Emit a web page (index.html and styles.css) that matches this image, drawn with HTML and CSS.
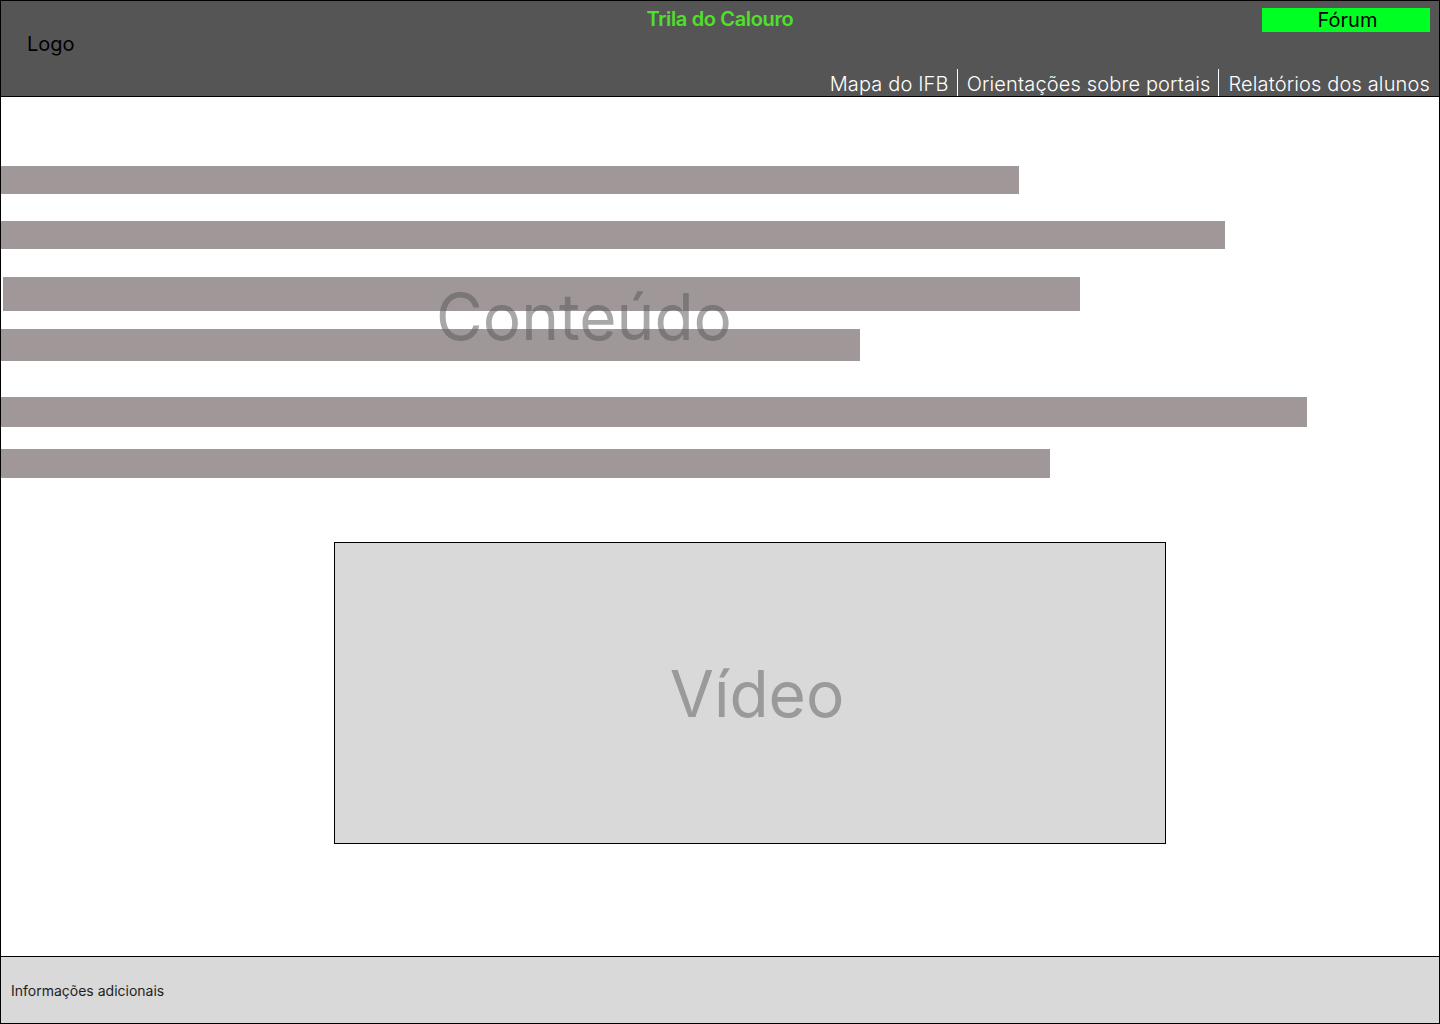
FILE: index.html
```html
<!DOCTYPE html>
<html lang="pt-BR">
<head>
<meta charset="utf-8">
<title>Trila do Calouro</title>
<link rel="stylesheet" href="styles.css">
</head>
<body>
<div class="page">
  <header class="header">
    <div class="logo">Logo</div>
    <div class="title">Trila do Calouro</div>
    <a class="forum" href="#">Fórum</a>
    <nav class="nav">
      <a href="#" class="nav-item">Mapa do IFB</a>
      <a href="#" class="nav-item">Orientações sobre portais</a>
      <a href="#" class="nav-item">Relatórios dos alunos</a>
    </nav>
  </header>
  <main class="main">
    <div class="bars">
      <div class="bar bar1"></div>
      <div class="bar bar2"></div>
      <div class="bar bar3"></div>
      <div class="bar bar4"></div>
      <div class="bar bar5"></div>
      <div class="bar bar6"></div>
    </div>
    <div class="content-label">Conteúdo</div>
    <div class="video"><span>Vídeo</span></div>
  </main>
  <footer class="footer">Informações adicionais</footer>
</div>
</body>
</html>
```
FILE: styles.css
```css
* { box-sizing: border-box; }
html, body { margin: 0; padding: 0; background: #fff; }
body { font-family: Inter, "Noto Sans", sans-serif; }

.page {
  width: 1440px;
  height: 1024px;
  border: 1px solid #000;
  display: flex;
  flex-direction: column;
  overflow: hidden;
}

.header {
  height: 96px;
  flex: none;
  background: #555555;
  border-bottom: 1px solid #000;
  display: grid;
  grid-template-columns: 1fr auto 1fr;
  grid-template-rows: auto 1fr auto;
  padding: 7px 9px 0 9px;
}

.logo {
  grid-column: 1;
  grid-row: 1 / 4;
  align-self: center;
  justify-self: start;
  margin-left: 17px;
  font-size: 20px;
  color: #000;
  line-height: 24px;
  margin-top: -17px;
}

.title {
  grid-column: 2;
  grid-row: 1;
  font-family: Inter, Roboto, sans-serif;
  font-weight: 600;
  font-size: 20px;
  line-height: 24px;
  color: #4fe02a;
  letter-spacing: -0.35px;
  margin-top: -1px;
}

.forum {
  grid-column: 3;
  grid-row: 1;
  justify-self: end;
  width: 168px;
  height: 24px;
  background: #00ff22;
  color: #000;
  text-decoration: none;
  font-size: 20px;
  line-height: 24px;
  text-align: center;
  padding-left: 3px;
}

.nav {
  grid-column: 1 / 4;
  grid-row: 3;
  justify-self: end;
  display: flex;
  align-items: stretch;
}

.nav-item {
  color: #fff;
  text-decoration: none;
  font-weight: 300;
  font-size: 20px;
  line-height: 24px;
  padding: 3px 0 0 9px;
  letter-spacing: 0.15px;
}
.nav-item + .nav-item {
  border-left: 1px solid #fff;
  margin-left: 8px;
}
.nav-item:first-child { padding-left: 0; }

.main {
  flex: 1;
  position: relative;
}

.bars {
  display: flex;
  flex-direction: column;
  padding-top: 69px;
}
.bar { background: #a09898; }
.bar1 { width: 1018px; height: 28px; }
.bar2 { width: 1224px; height: 28px; margin-top: 27px; }
.bar3 { width: 1077px; height: 34px; margin-top: 28px; margin-left: 2px; }
.bar4 { width: 859px; height: 32px; margin-top: 18px; }
.bar5 { width: 1306px; height: 30px; margin-top: 36px; }
.bar6 { width: 1049px; height: 29px; margin-top: 22px; }

.content-label {
  position: absolute;
  left: 435px;
  top: 188px;
  font-size: 64px;
  line-height: 64px;
  color: rgba(88, 88, 88, 0.52);
}

.video {
  margin: 64px 0 0 333px;
  width: 832px;
  height: 302px;
  background: #d9d9d9;
  border: 1px solid #000;
  display: flex;
  align-items: center;
  justify-content: center;
  padding-left: 14px;
  padding-top: 2px;
}
.video span {
  font-size: 64px;
  line-height: 64px;
  color: #9a9a9a;
}

.footer {
  height: 67px;
  flex: none;
  background: #d9d9d9;
  border-top: 1px solid #000;
  padding-left: 10px;
  display: flex;
  align-items: center;
  font-size: 14px;
  color: #1e1e1e;
}
```
